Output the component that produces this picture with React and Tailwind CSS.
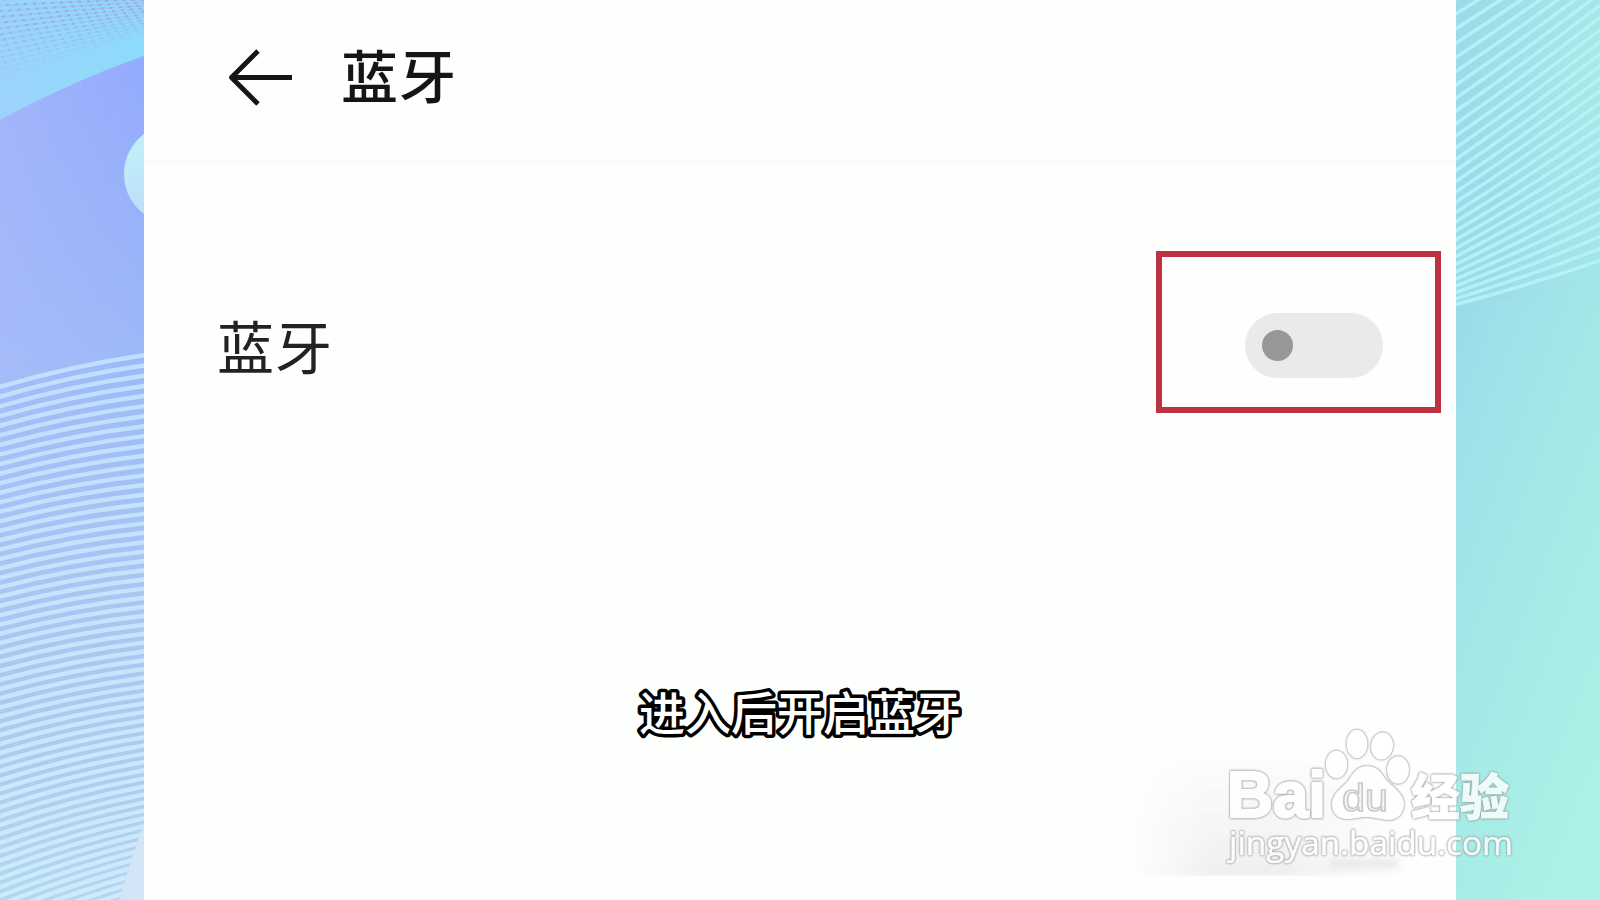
import { useState } from "react";

const leftLines = Array.from({ length: 62 }, (_, k) => {
  const l = 387 + 9.7 * k - 0.008 * k * k;
  const r = 354 + 10.3 * k - 0.024 * k * k;
  return `M-2 ${l + 0.5} Q72 ${(l + r) / 2 - 5} 146 ${r + 1}`;
});

const rightLines = Array.from({ length: 42 }, (_, k) => {
  const l = 304 - 5.6 * k - 0.17 * k * k;
  const r = 261 - 12.2 * k;
  return `M-2 ${l + 1} Q72 ${(l + r) / 2 + 3} 146 ${r - 1}`;
});

const dotLines = Array.from({ length: 14 }, (_, k) => {
  const l = 75 - k * 5.8;
  const r = l * 0.5 - 3;
  return {
    d: `M0 ${l} Q72 ${(l + r) / 2 - 1} 144 ${r}`,
    opacity: Math.min(0.15 + k * 0.08, 0.85),
    offset: (k * 2.5) % 9,
  };
});

function LeftArt() {
  return (
    <svg className="h-full w-36 shrink-0" viewBox="0 0 144 900">
      <defs>
        <linearGradient id="sky" gradientUnits="userSpaceOnUse" x1="0" y1="90" x2="144" y2="30">
          <stop offset="0" stopColor="#9dd3fb" />
          <stop offset="1" stopColor="#8bdcfc" />
        </linearGradient>
        <linearGradient id="violet" gradientUnits="userSpaceOnUse" x1="144" y1="60" x2="60" y2="900">
          <stop offset="0" stopColor="#94abfd" />
          <stop offset="0.35" stopColor="#9eb9f9" />
          <stop offset="0.6" stopColor="#a8c5f3" />
          <stop offset="0.85" stopColor="#aecdee" />
          <stop offset="1" stopColor="#b0daec" />
        </linearGradient>
        <linearGradient id="tint" x1="0" x2="1">
          <stop offset="0" stopColor="#b2bdfa" stopOpacity="0.5" />
          <stop offset="1" stopColor="#b2bdfa" stopOpacity="0" />
        </linearGradient>
        <linearGradient id="tintFade" x1="0" y1="0" x2="0" y2="1">
          <stop offset="0" stopColor="#fff" />
          <stop offset="0.5" stopColor="#bbb" />
          <stop offset="1" stopColor="#000" />
        </linearGradient>
        <mask id="tintMask">
          <rect width="144" height="800" fill="url(#tintFade)" />
        </mask>
        <linearGradient id="ball" x1="0" y1="0" x2="0" y2="1">
          <stop offset="0" stopColor="#c2f4f6" />
          <stop offset="1" stopColor="#bcdcfb" />
        </linearGradient>
        <linearGradient id="lline" gradientUnits="userSpaceOnUse" x1="0" y1="350" x2="0" y2="900">
          <stop offset="0" stopColor="#bedffe" />
          <stop offset="1" stopColor="#cfe9fd" />
        </linearGradient>
        <clipPath id="lclip">
          <path d="M0 340H144V823Q130 862 119 900H0Z" />
        </clipPath>
      </defs>
      <rect width="144" height="900" fill="url(#sky)" />
      {dotLines.map((l) => (
        <g key={l.d} fill="none" opacity={l.opacity}>
          <path d={l.d} stroke="#a6c2f3" strokeWidth="2" />
          <path d={l.d} stroke="#8faae6" strokeWidth="2" strokeDasharray="3 6" strokeDashoffset={l.offset} />
        </g>
      ))}
      <path d="M0 120Q75 80 144 56V900H0Z" fill="url(#violet)" />
      <path d="M0 120Q75 80 144 56V800H0Z" fill="url(#tint)" mask="url(#tintMask)" />
      <circle cx="174" cy="174" r="50" fill="url(#ball)" />
      <path d="M144 823Q130 862 119 900H144Z" fill="#d3e5f6" />
      <g clipPath="url(#lclip)" fill="none" stroke="url(#lline)" strokeWidth="4.4">
        {leftLines.map((d) => (
          <path key={d} d={d} />
        ))}
      </g>
    </svg>
  );
}

function RightArt() {
  return (
    <svg className="h-full w-36 shrink-0" viewBox="0 0 144 900">
      <defs>
        <linearGradient id="aqua" gradientUnits="userSpaceOnUse" x1="-10" y1="340" x2="255" y2="440">
          <stop offset="0" stopColor="#9bdbea" />
          <stop offset="0.22" stopColor="#a0e2e9" />
          <stop offset="0.55" stopColor="#a5e9e7" />
          <stop offset="1" stopColor="#aaf1e6" />
        </linearGradient>
        <radialGradient id="topGlow" gradientUnits="userSpaceOnUse" cx="170" cy="60" r="210">
          <stop offset="0" stopColor="#a8ede5" stopOpacity="0.9" />
          <stop offset="0.4" stopColor="#a8ede5" stopOpacity="0.5" />
          <stop offset="1" stopColor="#a8ede5" stopOpacity="0" />
        </radialGradient>
        <linearGradient id="cool" x1="0" x2="1">
          <stop offset="0" stopColor="#9bdbea" stopOpacity="0.8" />
          <stop offset="0.7" stopColor="#9bdbea" stopOpacity="0" />
        </linearGradient>
      </defs>
      <rect width="144" height="900" fill="url(#aqua)" />
      <rect width="144" height="300" fill="url(#topGlow)" />
      <rect width="144" height="300" fill="url(#cool)" />
      <g fill="none" stroke="#b7f2f7" strokeWidth="3.6" strokeOpacity="0.9">
        {rightLines.map((d) => (
          <path key={d} d={d} />
        ))}
      </g>
    </svg>
  );
}

function Watermark() {
  return (
    <svg className="absolute left-[1220px] top-[720px] h-[160px] w-[310px] opacity-80" viewBox="1220 720 310 160">
      <g fill="#fff" className="[filter:drop-shadow(0_0_1px_#888)_drop-shadow(0_0_0.5px_#999)]">
        <text x="1227" y="817" fontSize="64" fontWeight="700" fontFamily="'Liberation Sans', Arial, sans-serif" textLength="99" lengthAdjust="spacingAndGlyphs" stroke="#fff" strokeWidth="2.4">
          Bai
        </text>
        <ellipse cx="1336.5" cy="764.5" rx="10.7" ry="13.7" />
        <ellipse cx="1357" cy="744" rx="10.4" ry="14.2" />
        <ellipse cx="1382" cy="746" rx="11" ry="13.7" transform="rotate(8 1382 746)" />
        <ellipse cx="1398" cy="770" rx="11" ry="13.7" />
        <path d="M1367 766c-8 0-13 5-17 12-5 8-18 14-18 27 0 9 7 14 15 14 8 0 12-2 20-2s13 3 22 3c9 0 15-7 15-16 0-12-14-18-20-27-4-7-9-11-17-11Z" />
        <text x="1411" y="815" fontSize="49" fontWeight="900" fontFamily="'Noto Sans CJK SC', sans-serif" stroke="#fff" strokeWidth="0.8">
          经验
        </text>
        <text x="1229" y="855" fontSize="32" fontFamily="'Open Sans', 'Noto Sans', sans-serif" textLength="284" lengthAdjust="spacingAndGlyphs" stroke="#fff" strokeWidth="0.6">
          jingyan.baidu.com
        </text>
      </g>
      <text x="1342" y="811" fontSize="39" fontFamily="'Liberation Sans', Arial, sans-serif" textLength="46" lengthAdjust="spacingAndGlyphs" fill="#f4f4f4" stroke="#bdbdbd" strokeWidth="1.6">
        du
      </text>
    </svg>
  );
}

function BackArrow() {
  return (
    <svg className="h-16 w-[70px]" viewBox="0 0 70 64" fill="none" stroke="#151515" strokeWidth="4.8" strokeLinejoin="round">
      <path d="M34 6L7.500 32.500L34 59M7.500 32.500H68" />
    </svg>
  );
}

export default function App() {
  const [on, setOn] = useState(false);

  return (
    <div className="relative flex h-[900px] w-[1600px] overflow-hidden font-['Noto_Sans_CJK_SC',sans-serif]">
      <LeftArt />

      <main className="relative flex flex-1 flex-col bg-[#fdfffd]">
        <header className="flex h-[165px] items-start border-b-[5px] border-[#fafafa] pl-[80px] pt-[41px]">
          <div className="pt-1">
            <BackArrow />
          </div>
          <h1 className="ml-[47px] text-[57px] font-medium leading-[64px] tracking-[1px] text-[#151515]">
            蓝牙
          </h1>
        </header>

        <div className="mt-[86px] flex justify-between pl-[73px] pr-[15px]">
          <span className="pt-[61px] text-[57px] leading-[64px] tracking-[1px] text-[#222]">蓝牙</span>
          <div className="flex h-[162px] w-[285px] justify-end border-[6px] border-[#bb3342] pr-[52px] pt-[56px]">
            <button
              onClick={() => setOn(!on)}
              className="flex h-[65px] w-[138px] items-center rounded-full bg-[#e9ebe9] px-[17px]"
            >
              <span className="size-[31px] rounded-full bg-[#969896]" />
            </button>
          </div>
        </div>

        <div className="absolute bottom-[24px] right-0 h-[125px] w-[325px] bg-linear-to-b from-transparent to-[#efefef] mask-[linear-gradient(to_right,transparent,black_25%,black_45%,transparent_85%)] blur-[2px]" />
        <div className="absolute bottom-[32px] right-[57px] h-[9px] w-[70px] bg-[#e9e9e9] blur-[3px]" />

        <svg className="absolute left-[480px] top-[670px] h-[88px] w-[352px]" viewBox="0 0 352 88">
          <text
            x="176"
            y="60"
            textAnchor="middle"
            fontSize="46"
            fontWeight="500"
            fill="#fff"
            stroke="#000"
            strokeWidth="7"
            strokeLinejoin="round"
            paintOrder="stroke"
          >
            进入后开启蓝牙
          </text>
        </svg>
      </main>

      <RightArt />
      <Watermark />
    </div>
  );
}
